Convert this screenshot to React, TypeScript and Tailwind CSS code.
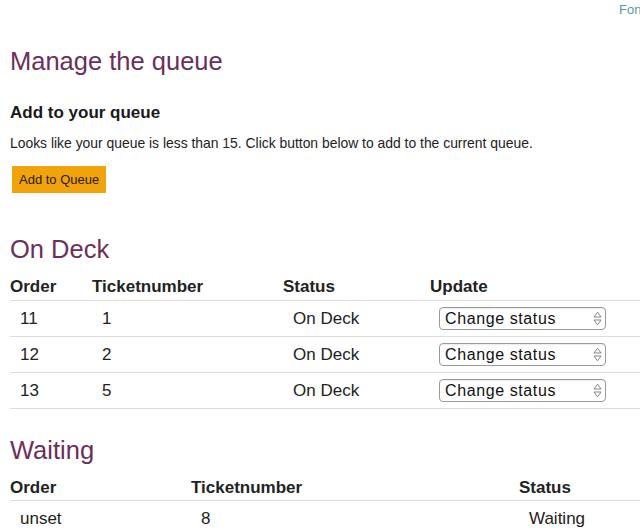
import React from 'react';

type TRow = { order: string; ticket: string; status: string };

const onDeck: TRow[] = [
  { order: '11', ticket: '1', status: 'On Deck' },
  { order: '12', ticket: '2', status: 'On Deck' },
  { order: '13', ticket: '5', status: 'On Deck' },
];

const waiting: TRow[] = [{ order: 'unset', ticket: '8', status: 'Waiting' }];

const StatusSelect = () => {
  return (
    <div className="w-[167px] h-[23px] border border-[#9a9a9a] rounded-[4px] bg-white flex items-center pl-[5px] pr-[3px] shadow-[inset_0_1px_1px_rgba(0,0,0,0.08)]">
      <span className="text-[16px] leading-[20px] text-[#111] tracking-[0.6px]">Change status</span>
      <svg className="ml-auto" width="9" height="15" viewBox="0 0 9 15" fill="none" stroke="#777" strokeWidth="0.9">
        <path d="M4.5 1.2 L8 6 L1 6 Z" />
        <path d="M4.5 13.8 L8 9 L1 9 Z" />
      </svg>
    </div>
  );
};

const OnDeckTable = () => {
  return (
    <div className="w-[630px]">
      <div className="flex mt-[14px] h-[20px] pb-[3px] border-b border-[#dddddd] box-content font-bold text-[17px] leading-[20px] text-[#222]">
        <div className="w-[82px]">Order</div>
        <div className="w-[191px]">Ticketnumber</div>
        <div className="w-[147px]">Status</div>
        <div>Update</div>
      </div>
      {onDeck.map((row) => (
        <div key={row.order} className="flex items-center h-[36px] border-b border-[#dddddd] text-[17px] leading-[20px] text-[#222]">
          <div className="w-[82px] pl-[10px]">{row.order}</div>
          <div className="w-[191px] pl-[10px]">{row.ticket}</div>
          <div className="w-[147px] pl-[10px]">{row.status}</div>
          <div className="pl-[9px]">
            <StatusSelect />
          </div>
        </div>
      ))}
    </div>
  );
};

const WaitingTable = () => {
  return (
    <div className="w-[630px]">
      <div className="flex mt-[14px] h-[20px] pb-[2px] border-b border-[#dddddd] box-content font-bold text-[17px] leading-[20px] text-[#222]">
        <div className="w-[181px]">Order</div>
        <div className="w-[328px]">Ticketnumber</div>
        <div>Status</div>
      </div>
      {waiting.map((row) => (
        <div key={row.ticket} className="flex items-center h-[36px] border-b border-[#dddddd] text-[17px] leading-[20px] text-[#222]">
          <div className="w-[181px] pl-[10px]">{row.order}</div>
          <div className="w-[328px] pl-[10px]">{row.ticket}</div>
          <div className="pl-[10px]">{row.status}</div>
        </div>
      ))}
    </div>
  );
};

export default function App() {
  return (
    <main className="w-[640px] h-[528px] overflow-hidden bg-white font-['Liberation_Sans',Arial,sans-serif] text-[#222]">
      <div className="h-[20px] pl-[619px] whitespace-nowrap overflow-hidden text-[13px] leading-[20px] text-[#4f9c9c]">
        Fonts
      </div>
      <div className="pl-[10px]">
        <h1 className="mt-[27px] text-[25.5px] leading-[28px] text-[#6c2f59]">Manage the queue</h1>
        <h3 className="mt-[28px] text-[17px] leading-[20px] font-bold text-[#1a1a1a]">Add to your queue</h3>
        <p className="mt-[11px] text-[13.9px] leading-[18px] text-[#222]">
          Looks like your queue is less than 15. Click button below to add to the current queue.
        </p>
        <button className="mt-[14px] ml-[2px] h-[27px] px-[7px] bg-[#f1a30b] text-[13px] leading-[27px] text-[#2a1a05]">
          Add to Queue
        </button>
        <h2 className="mt-[42px] text-[25.5px] leading-[28px] text-[#6c2f59]">On Deck</h2>
        <OnDeckTable />
        <h2 className="mt-[27px] text-[25.5px] leading-[28px] text-[#6c2f59]">Waiting</h2>
        <WaitingTable />
      </div>
    </main>
  );
}
